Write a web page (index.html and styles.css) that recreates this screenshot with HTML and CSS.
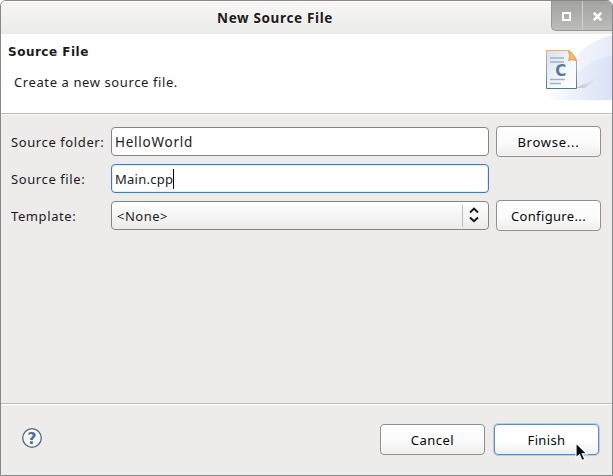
FILE: index.html
```html
<!DOCTYPE html>
<html lang="en">
<head>
<meta charset="utf-8">
<title>New Source File</title>
<link rel="stylesheet" href="styles.css">
</head>
<body>
<div class="window">
  <header class="titlebar">
    <h1 class="title">New Source File</h1>
    <div class="controls">
      <button class="control" aria-label="Maximize"><svg width="9" height="9" viewBox="0 0 9 9"><path d="M1 1H8V8H1Z" fill="none" stroke="#fff" stroke-width="2"/></svg></button>
      <button class="control" aria-label="Close"><svg width="9" height="9" viewBox="0 0 9 9"><path d="M.7 .7L8.3 8.3M8.3 .7L.7 8.3" stroke="#fff" stroke-width="2.5"/></svg></button>
    </div>
  </header>
  <section class="banner">
    <div class="intro">
      <h2 class="heading">Source File</h2>
      <p class="description">Create a new source file.</p>
    </div>
    <svg class="art" width="75" height="66" viewBox="0 0 75 66">
      <defs>
        <linearGradient id="sweep"><stop offset="0" stop-color="#fff"/><stop offset=".5" stop-color="#f2f5fc"/><stop offset="1" stop-color="#e5ebf9"/></linearGradient>
        <linearGradient id="sweep2"><stop offset="0" stop-color="#f6f8fd" stop-opacity="0"/><stop offset=".5" stop-color="#e8edf9"/><stop offset="1" stop-color="#d9e2f6"/></linearGradient>
        <linearGradient id="paper" x2="1" y2="1"><stop offset="0" stop-color="#d5e0ee"/><stop offset=".6" stop-color="#f5f8fc"/><stop offset="1" stop-color="#fff"/></linearGradient>
        <linearGradient id="edge" x2="0" y2="1"><stop offset="0" stop-color="#d3b487"/><stop offset=".5" stop-color="#91a3ad"/><stop offset="1" stop-color="#567785"/></linearGradient>
        <linearGradient id="shade"><stop offset="0" stop-color="#a29db8" stop-opacity=".7"/><stop offset="1" stop-color="#d8d8e9" stop-opacity="0"/></linearGradient>
      </defs>
      <path d="M4 66C26 52 30 12 75 1V66Z" fill="url(#sweep)"/>
      <path d="M12 66C30 54 42 26 75 22V66Z" fill="url(#sweep2)"/>
      <path d="M39 54L64 42L48 54Z" fill="url(#shade)"/>
      <path d="M9.5 16.5H31L39.5 27V54.5H9.5Z" fill="url(#paper)" stroke="url(#edge)"/>
      <path d="M31 16.5C33 20 33 23 31.5 26.5C34 25.5 37 25.5 39.5 27C38 22 35 18 31 16.5Z" fill="#f5bd72" stroke="#e29c43"/>
      <path d="M13 24H27M13 28H27M13 45.5H28M13 49.5H24" stroke="#a4aecb" stroke-width="1.4"/>
      <text class="doc-letter" x="18.2" y="42">C</text>
    </svg>
  </section>
  <main class="form">
    <label class="label folder-label">Source folder:</label>
    <div class="entry folder">HelloWorld</div>
    <button class="button">Browse...</button>
    <label class="label file-label">Source file:</label>
    <div class="entry focused"><span class="typed">Main.cpp</span><span class="caret"></span></div>
    <span></span>
    <label class="label template-label">Template:</label>
    <div class="entry select"><span class="choice">&lt;None&gt;</span><span class="arrows"><svg width="12" height="16" viewBox="0 0 12 16"><path d="M2 5.4L6 1.6L10 5.4M2 10.4L6 14.2L10 10.4" fill="none" stroke="#171717" stroke-width="2"/></svg></span></div>
    <button class="button configure">Configure...</button>
  </main>
  <footer class="footer">
    <svg class="help" width="22" height="22" viewBox="0 0 22 22" aria-label="Help"><circle cx="11" cy="11" r="9.3" fill="#f6f8fa" stroke="#536788" stroke-width="1.3"/><text class="help-mark" x="11" y="16.8">?</text></svg>
    <div class="actions">
      <button class="button cancel">Cancel</button>
      <button class="button finish">Finish</button>
    </div>
  </footer>
  <svg class="cursor" width="14" height="21" viewBox="0 0 14 21"><path d="M1 1V16L4.5 12.8L7 18.5L9.8 17.2L7.3 11.8H12Z" fill="#090909" stroke="#fff" stroke-width="1.2"/></svg>
</div>
</body>
</html>
```

FILE: styles.css
```css
* { box-sizing: border-box; }
body { margin: 0; background: #fff; font: 13px/20px "Noto Sans", sans-serif; color: #1b1b1b; }
h1, h2, p { margin: 0; }
button { font: inherit; color: inherit; padding: 0; }
.window { position: relative; width: 613px; height: 476px; border: 1px solid #888; border-radius: 6px 6px 0 0; background: #edeceb; overflow: hidden; display: flex; flex-direction: column; }
.titlebar { height: 33px; flex: none; display: flex; align-items: flex-start; background: linear-gradient(#f8f7f6, #eaeae9); box-shadow: inset 0 1px #fff; }
.title { flex: 1; padding: 7px 0 0 216px; font-size: 13.5px; line-height: 20px; letter-spacing: .65px; font-weight: 700; text-shadow: 0 1px #fff; white-space: nowrap; }
.controls { display: flex; width: 61px; height: 30px; border: 1px solid #989897; border-width: 0 0 1px 1px; border-radius: 0 0 0 5px; background: linear-gradient(#a2a2a1, #bcbcba); overflow: hidden; }
.control { flex: 1; display: flex; align-items: center; justify-content: center; border: 0; border-left: 1px solid #d0d0cf; background: transparent; padding-top: 2px; }
.control:first-child { border-left: 0; }
.banner { height: 80px; flex: none; display: flex; justify-content: space-between; background: #fff; border-bottom: 1px solid #bab9b4; }
.heading { padding: 8px 0 0 7px; font: 700 12px/20px "DejaVu Sans", sans-serif; letter-spacing: .5px; }
.description { padding: 10px 0 0 13px; letter-spacing: .6px; }
.form { flex: 1; display: grid; grid-template-columns: 93px 378px 105px; grid-template-rows: 31px 31px 31px; column-gap: 7px; row-gap: 6px; align-content: start; align-items: center; padding: 11px 0 0 10px; border-top: 1px solid #f8f8f8; }
.label { white-space: nowrap; letter-spacing: .6px; }
.entry { height: 29px; display: flex; align-items: center; border: 1px solid #858580; border-radius: 4px; background: #fff; padding: 1px 0 0 3px; letter-spacing: .35px; }
.entry.folder { font-size: 13.5px; letter-spacing: .75px; }
.entry.focused { border-color: #4878af; box-shadow: inset 0 0 0 1px #e4edf8; }
.typed { letter-spacing: .25px; }
.caret { width: 1px; height: 20px; background: #000; }
.entry.select { justify-content: space-between; padding: 0 0 0 5px; background: linear-gradient(#fff, #ecebea); letter-spacing: .5px; }
.arrows { width: 26px; height: 22px; display: flex; align-items: center; justify-content: center; border-left: 1px solid #bbb; padding: 0 3px 1px 0; }
.button { width: 105px; height: 31px; border: 1px solid #918e8b; border-radius: 4px; background: linear-gradient(#fff, #fafafa 60%, #edeceb); box-shadow: inset 0 0 0 1px rgba(255,255,255,.65); letter-spacing: .75px; color: #080808; }
.button.configure { letter-spacing: .35px; }
.footer { height: 72px; flex: none; display: flex; justify-content: space-between; align-items: flex-start; border-top: 1px solid #bab9b7; box-shadow: inset 0 1px #fff; padding: 20px 13px 0 20px; }
.help { margin-top: 3px; }
.actions { display: flex; gap: 9px; }
.button.cancel { letter-spacing: .5px; }
.button.finish { letter-spacing: .35px; border-color: #6289b8; box-shadow: 0 0 0 1px #b9cde6; background: linear-gradient(#fff 55%, #edf0f3); }
.cursor { position: absolute; left: 574px; top: 441px; }
.doc-letter { font: 700 15px "DejaVu Sans", sans-serif; fill: #5c7898; }
.help-mark { font: 700 16px "DejaVu Sans", sans-serif; fill: #546c98; text-anchor: middle; }
```
